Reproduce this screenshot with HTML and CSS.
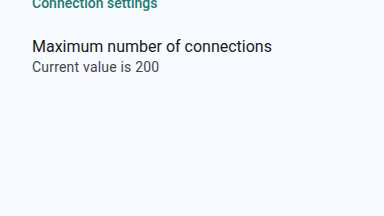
FILE: index.html
```html
<!DOCTYPE html>
<html lang="en">
<head>
  <meta charset="UTF-8">
  <title>Connection settings</title>
  <link rel="stylesheet" href="styles.css">
</head>
<body>
  <div class="screen">
    <div class="category">Connection settings</div>
    <div class="pref">
      <div class="pref-title">Maximum number of connections</div>
      <div class="pref-summary">Current value is 200</div>
    </div>
  </div>
</body>
</html>
```

FILE: styles.css
```css
html, body { margin: 0; padding: 0; }
body { font-family: Roboto, "Noto Sans", sans-serif; background: #f6f9fd; width: 384px; height: 216px; overflow: hidden; }
.screen { margin-top: -7px; }
.category { padding: 0 32px; font-size: 14px; font-weight: 500; color: #1f7a70; line-height: 20px; }
.pref { padding: 23px 32px 0; }
.pref-title { font-size: 16px; color: #1a1c1e; line-height: 22px; }
.pref-summary { font-size: 14px; color: #44474a; line-height: 19px; letter-spacing: 0.2px; }
```
